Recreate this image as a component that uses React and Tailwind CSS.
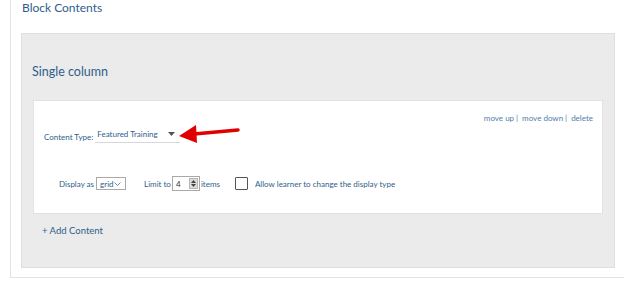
export default function App() {
  const font = { fontFamily: 'Lato, "Open Sans", "Liberation Sans", sans-serif' };
  return (
    <div className="w-[624px] h-[284px] bg-white overflow-hidden text-[#2f5e8c]" style={font}>
      <div className="ml-[10px] h-[278px] border-l border-b border-[#e3e3e3]">
        <div className="pl-[11px] pt-[1px] h-[33px] text-[12px] leading-[14px]">Block Contents</div>
        <div className="ml-[10px] w-[594px] h-[235px] bg-[#ebebeb] border border-[#dedede]">
          <div className="pl-[10px] pt-[31px] h-[66px] text-[12.5px] leading-[14px]">Single column</div>
          <div className="relative ml-[11px] w-[570px] h-[114px] bg-white border border-[#e2e2e2]">
            <div className="flex justify-end pr-[9px] pt-[11px] text-[8px] leading-[12px] text-[#4f7eaa]">
              <span>move up</span>
              <span className="ml-[2px] mr-[4px]">|</span>
              <span>move down</span>
              <span className="ml-[2px] mr-[4px]">|</span>
              <span>delete</span>
            </div>
            <div className="flex items-end pl-[10px] pt-[4px] text-[8px] leading-[12px]">
              <span>Content Type:</span>
              <div className="ml-[2px] w-[85px] flex items-center justify-between border-b border-[#d8d8d8] pb-[2px] pl-[2px] pr-[5px]">
                <span className="text-[#2f5e8c]">Featured Training</span>
                <svg width="7" height="4" viewBox="0 0 7 4"><path d="M0 0H7L3.5 4Z" fill="#555" /></svg>
              </div>
            </div>
            <svg className="absolute left-[140px] top-[20px]" width="70" height="26" viewBox="0 0 70 26">
              <path d="M64 9 L20 13" stroke="#e00000" strokeWidth="3.5" strokeLinecap="round" />
              <path d="M5 15 L22 4 L23 22 Z" fill="#e00000" />
            </svg>
            <div className="flex items-center pl-[25px] pt-[33px] text-[8px] leading-[12px]">
              <span>Display as</span>
              <div className="ml-[2px] w-[30px] h-[13px] border border-[#a9a9a9] flex items-center justify-between pl-[3px] pr-[4px] text-[#2f5e8c]">
                <span>grid</span>
                <svg width="7" height="4" viewBox="0 0 7 4"><path d="M0.5 0.5L3.5 3.5L6.5 0.5" stroke="#777" fill="none" strokeWidth="0.9" /></svg>
              </div>
              <span className="ml-[18px]">Limit to</span>
              <div className="ml-[1px] w-[28px] h-[15px] border border-[#a9a9a9] flex items-center justify-between pl-[3px] pr-[1px]">
                <span className="text-[#333]">4</span>
                <div className="w-[9px] h-[11px] bg-[#dcdcdc] border border-[#b5b5b5] flex flex-col items-center justify-center gap-[1px]">
                  <svg width="5" height="3" viewBox="0 0 5 3"><path d="M0 3H5L2.5 0Z" fill="#444" /></svg>
                  <svg width="5" height="3" viewBox="0 0 5 3"><path d="M0 0H5L2.5 3Z" fill="#444" /></svg>
                </div>
              </div>
              <span className="ml-[1px]">items</span>
              <div className="ml-[15px] w-[13px] h-[13px] border border-[#555] rounded-[1px] bg-white" />
              <span className="ml-[7px]">Allow learner to change the display type</span>
            </div>
          </div>
          <div className="pl-[20px] pt-[11px] text-[9.5px] leading-[12px] text-[#2f5e8c]">+ Add Content</div>
        </div>
      </div>
    </div>
  );
}
